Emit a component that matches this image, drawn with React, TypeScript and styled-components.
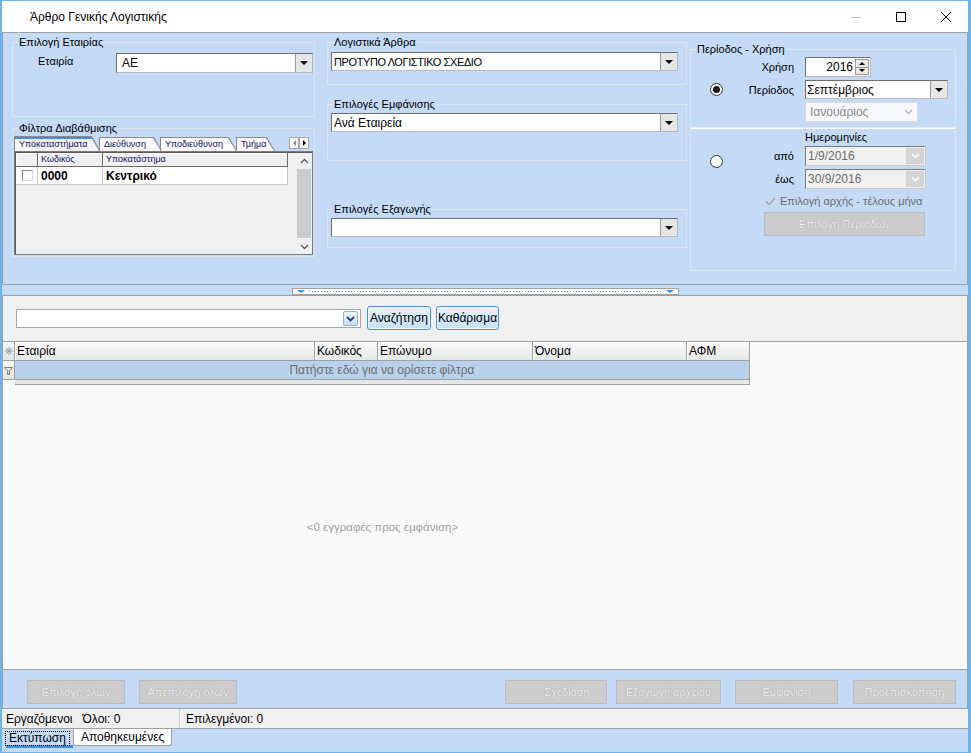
import React from 'react';
import styled, { createGlobalStyle } from 'styled-components';

const PANEL = '#c4daf7';
const FACE = '#f0f0f0';
const LINE = '#a0a0a0';
const GROUP = '#dbe5f1';
const FRAME = '#6bb3ec';

const GlobalStyle = createGlobalStyle`
  html, body { margin: 0; padding: 0; background: #ffffff; }
  body {
    font-family: 'Liberation Sans', Arial, sans-serif;
    font-size: 12px;
    color: #000;
  }
  *, *::before, *::after { box-sizing: border-box; }
`;

const Window = styled.div`
  width: 971px;
  height: 753px;
  display: flex;
  flex-direction: column;
  border-top: 1px solid ${FRAME};
  border-bottom: 1px solid ${FRAME};
  border-left: 2px solid ${FRAME};
  border-right: 3px solid ${FRAME};
  background: ${PANEL};
  overflow: hidden;
`;

/* title bar */
const TitleBar = styled.header`
  flex: none;
  height: 31px;
  display: flex;
  align-items: center;
  background: #fff;
  padding-left: 28px;
`;

const Caption = styled.span`
  flex: 1;
  font-size: 12px;
`;

const CaptionButton = styled.div`
  width: 45px;
  height: 31px;
  display: flex;
  align-items: center;
  justify-content: center;
`;

/* top panel */
const TopPanel = styled.section`
  flex: none;
  height: 253px;
  display: flex;
  align-items: flex-start;
  border: 1px solid ${LINE};
  padding-left: 9px;
  font-size: 11px;
`;

const Column = styled.div<{ $w: number; $ml?: number }>`
  width: ${(p) => p.$w}px;
  margin-left: ${(p) => p.$ml ?? 0}px;
  display: flex;
  flex-direction: column;
`;

const Group = styled.fieldset<{ $h: number; $mt: number }>`
  margin: ${(p) => p.$mt}px 0 0;
  padding: 0;
  min-width: 0;
  height: ${(p) => p.$h}px;
  border: 1px solid ${GROUP};
`;

const Legend = styled.legend`
  margin-left: 5px;
  padding: 0 1px;
  font-size: 11px;
  line-height: 14px;
`;

const FieldRow = styled.div<{ $mt?: number; $pl?: number }>`
  display: flex;
  align-items: flex-start;
  margin-top: ${(p) => p.$mt ?? 0}px;
  padding-left: ${(p) => p.$pl ?? 0}px;
`;

const FieldLabel = styled.span<{ $w: number }>`
  width: ${(p) => p.$w}px;
  margin-top: 1px;
  line-height: 14px;
`;

const Combo = styled.div<{ $w: number; $h?: number }>`
  width: ${(p) => p.$w}px;
  height: ${(p) => p.$h ?? 20}px;
  display: flex;
  background: #fff;
  border: 1px solid #6e6e6e;
  border-right-color: #b9b9b9;
  border-bottom-color: #b9b9b9;
`;

const ComboText = styled.span<{ $pl?: number; $narrow?: boolean }>`
  flex: 1;
  display: flex;
  align-items: center;
  padding-left: ${(p) => p.$pl ?? 2}px;
  white-space: nowrap;
  overflow: hidden;
  font-size: ${(p) => (p.$narrow ? '11px' : '12px')};
  letter-spacing: ${(p) => (p.$narrow ? '-0.4px' : '0')};
`;

const DropButton = styled.span`
  width: 17px;
  display: flex;
  align-items: center;
  justify-content: center;
  background: #e6e6e6;
  border-left: 1px solid #9a9a9a;
`;

const DropArrow = styled.span`
  width: 0;
  height: 0;
  border-left: 4px solid transparent;
  border-right: 4px solid transparent;
  border-top: 4px solid #000;
`;

/* tab control inside filter group */
const TabControl = styled.div`
  margin: 1px 1px 0;
  display: flex;
  flex-direction: column;
`;

const TabHeader = styled.div`
  height: 15px;
  display: flex;
  align-items: flex-end;
`;

const Tab = styled.div<{ $w: number; $ml: number; $active?: boolean }>`
  width: ${(p) => p.$w}px;
  height: ${(p) => (p.$active ? 15 : 14)}px;
  margin-left: ${(p) => p.$ml}px;
  padding: 1px 1px 0 1px;
  background: #8a8a8a;
  clip-path: polygon(0 0, calc(100% - 8px) 0, 100% 100%, 0 100%);
  position: relative;
  z-index: ${(p) => (p.$active ? 2 : 1)};
`;

const TabFace = styled.div<{ $active?: boolean }>`
  height: 100%;
  padding-left: 4px;
  background: ${(p) => (p.$active ? '#f4f4f4' : '#fafafa')};
  border-top: ${(p) => (p.$active ? '2px solid #3d8fe4' : 'none')};
  clip-path: polygon(0 0, calc(100% - 8px) 0, 100% 100%, 0 100%);
  font-size: 9px;
  line-height: ${(p) => (p.$active ? 11 : 13)}px;
  color: #10106a;
  white-space: nowrap;
`;

const TabScroll = styled.div`
  margin-left: auto;
  margin-right: 4px;
  margin-bottom: 2px;
  display: flex;
`;

const TabScrollButton = styled.span`
  width: 10px;
  height: 12px;
  display: flex;
  align-items: center;
  justify-content: center;
  background: #fbfbfb;
  border: 1px solid #a8a8a8;
`;

const SideArrow = styled.span<{ $dir: 'left' | 'right'; $dim?: boolean }>`
  width: 0;
  height: 0;
  border-top: 3px solid transparent;
  border-bottom: 3px solid transparent;
  ${(p) => (p.$dir === 'left' ? 'border-right' : 'border-left')}: 3px solid ${(p) => (p.$dim ? '#8c8c8c' : '#000')};
`;

const TabBody = styled.div`
  height: 104px;
  display: flex;
  background: ${FACE};
  border: 1px solid #7d7d7d;
  box-shadow: inset 1px 1px 0 #5a5a5a;
  padding: 1px 0 0 1px;
`;

const BranchGrid = styled.div`
  width: 272px;
  display: flex;
  flex-direction: column;
`;

const BranchHead = styled.div`
  height: 14px;
  display: flex;
`;

const BranchHeadCell = styled.div<{ $w: number }>`
  width: ${(p) => p.$w}px;
  padding-left: 3px;
  background: ${FACE};
  border-right: 1px solid #6a6a6a;
  border-bottom: 1px solid #6a6a6a;
  box-shadow: inset 1px 1px 0 #fff;
  font-size: 9px;
  line-height: 13px;
  color: #10106a;
  white-space: nowrap;
`;

const BranchRow = styled.div`
  height: 18px;
  display: flex;
  background: #fff;
`;

const BranchCell = styled.div<{ $w: number }>`
  width: ${(p) => p.$w}px;
  display: flex;
  align-items: center;
  padding-left: 3px;
  border-right: 1px solid #c8c8c8;
  border-bottom: 1px solid #c8c8c8;
  font-weight: bold;
  font-size: 12px;
`;

const SunkenCheck = styled.span`
  width: 11px;
  height: 11px;
  margin-left: 3px;
  background: #fff;
  border: 1px solid #8a8a8a;
  border-right-color: #dcdcdc;
  border-bottom-color: #dcdcdc;
`;

const VScroll = styled.div`
  width: 16px;
  margin-left: auto;
  display: flex;
  flex-direction: column;
  background: ${FACE};
`;

const VScrollButton = styled.div`
  height: 15px;
  display: flex;
  align-items: center;
  justify-content: center;
`;

const VThumb = styled.div`
  flex: 1;
  margin: 1px 1px;
  background: #cdcdcd;
`;

/* right column: period */
const PeriodGrid = styled.div`
  display: grid;
  grid-template-columns: 50px 54px 10px 1fr;
  row-gap: 3px;
  margin-top: 1px;
`;

const BottomGrid = styled.div`
  display: grid;
  grid-template-columns: 50px 54px 10px 1fr;
`;

const RadioCell = styled.div<{ $rows: string; $mt?: number }>`
  grid-column: 1;
  grid-row: ${(p) => p.$rows};
  display: flex;
  justify-content: center;
  align-self: ${(p) => (p.$mt === undefined ? 'center' : 'start')};
  margin-top: ${(p) => p.$mt ?? 0}px;
`;

const Radio = styled.span<{ $checked?: boolean }>`
  width: 13px;
  height: 13px;
  border-radius: 50%;
  border: 1px solid #333;
  background: #fff;
  display: flex;
  align-items: center;
  justify-content: center;
  &::after {
    content: '';
    width: 7px;
    height: 7px;
    border-radius: 50%;
    background: ${(p) => (p.$checked ? '#1a1a1a' : 'transparent')};
  }
`;

const GridLabel = styled.span<{ $row: number; $mt?: number }>`
  grid-column: 2;
  grid-row: ${(p) => p.$row};
  align-self: center;
  text-align: right;
  padding-right: 1px;
  margin-top: ${(p) => p.$mt ?? 0}px;
  line-height: 14px;
`;

const GridField = styled.div<{ $row: number; $mt?: number }>`
  grid-column: 4;
  grid-row: ${(p) => p.$row};
  margin-top: ${(p) => p.$mt ?? 0}px;
  display: flex;
`;

const SpinBox = styled.div`
  width: 66px;
  height: 20px;
  display: flex;
  background: #fff;
  border: 1px solid #6e6e6e;
  border-right-color: #b9b9b9;
  border-bottom-color: #b9b9b9;
`;

const SpinValue = styled.span`
  flex: 1;
  text-align: right;
  padding-right: 2px;
  line-height: 18px;
  font-size: 12px;
`;

const SpinButtons = styled.span`
  width: 14px;
  margin: 1px 1px 1px 0;
  display: flex;
  flex-direction: column;
  background: #e9e9e9;
  border: 1px solid #9a9a9a;
`;

const SpinHalf = styled.span<{ $up?: boolean }>`
  flex: 1;
  display: flex;
  align-items: center;
  justify-content: center;
  ${(p) => (p.$up ? 'border-bottom: 1px solid #9a9a9a;' : '')}
  &::after {
    content: '';
    border-left: 3px solid transparent;
    border-right: 3px solid transparent;
    ${(p) => (p.$up ? 'border-bottom' : 'border-top')}: 3px solid #000;
  }
`;

const DisabledCombo = styled.div<{ $w: number; $sunken?: boolean }>`
  width: ${(p) => p.$w}px;
  height: 20px;
  display: flex;
  background: ${(p) => (p.$sunken ? '#f0f0f0' : '#f7f9fc')};
  border: 1px solid ${(p) => (p.$sunken ? '#7a7a7a' : '#d9d9d9')};
  ${(p) => (p.$sunken ? 'border-right-color: #c9c9c9; border-bottom-color: #c9c9c9;' : '')}
  color: ${(p) => (p.$sunken ? '#6d6d6d' : '#8a8a8a')};
  font-size: 12px;
`;

const DisabledText = styled.span<{ $pl: number }>`
  flex: 1;
  padding-left: ${(p) => p.$pl}px;
  line-height: 18px;
  white-space: nowrap;
`;

const DisabledDrop = styled.span<{ $filled?: boolean }>`
  width: 18px;
  margin: ${(p) => (p.$filled ? '1px' : '0')};
  display: flex;
  align-items: center;
  justify-content: center;
  background: ${(p) => (p.$filled ? '#d4d4d4' : 'transparent')};
`;

const Separator = styled.div`
  height: 2px;
  margin-top: 5px;
  background: #ffffff;
  border-top: 1px solid #e6edf7;
`;

const DatesTitle = styled.div`
  grid-column: 4;
  grid-row: 1;
  margin-top: 1px;
  line-height: 14px;
`;

const CheckRow = styled.div`
  grid-column: 2 / 5;
  grid-row: 4;
  margin-top: 5px;
  padding-left: 23px;
  display: flex;
  align-items: center;
  gap: 3px;
  color: #6d6d6d;
  line-height: 14px;
`;

const CheckMarkBox = styled.span`
  width: 13px;
  height: 13px;
  display: flex;
  align-items: center;
  justify-content: center;
  border: 1px solid #cfd9e6;
`;

const PeriodsButton = styled.div`
  grid-column: 2 / 5;
  grid-row: 5;
  margin: 4px 0 0 23px;
  width: 161px;
  height: 24px;
  display: flex;
  align-items: center;
  justify-content: center;
  background: #cccccc;
  border: 1px solid #bdbdbd;
  color: #eeeeee;
  text-shadow: 0 0 1px #8f8f8f;
`;

/* splitter */
const Splitter = styled.div`
  flex: none;
  height: 10px;
  padding-left: 290px;
`;

const SplitHandle = styled.div`
  margin-top: 3px;
  width: 387px;
  height: 7px;
  display: flex;
  align-items: center;
  gap: 4px;
  padding: 0 4px;
  background: #fff;
  border: 1px solid ${LINE};
`;

const SplitArrow = styled.span`
  border-left: 4px solid transparent;
  border-right: 4px solid transparent;
  border-top: 3px solid #2f8ff0;
`;

const DottedLine = styled.span`
  flex: 1;
  height: 1px;
  background-image: linear-gradient(to right, #2f8ff0 1px, transparent 1px);
  background-size: 3px 1px;
`;

/* lower panel */
const LowerPanel = styled.div`
  flex: none;
  display: flex;
  flex-direction: column;
  border-top: 1px solid ${LINE};
  border-left: 1px solid ${LINE};
  border-right: 1px solid ${LINE};
`;

const SearchBar = styled.div`
  height: 46px;
  display: flex;
  align-items: center;
  padding: 0 0 1px 13px;
  background: ${FACE};
  border-bottom: 1px solid ${LINE};
`;

const SearchCombo = styled.div`
  width: 345px;
  height: 19px;
  display: flex;
  align-items: center;
  justify-content: flex-end;
  padding-right: 2px;
  background: #fff;
  border: 1px solid #a6a6a6;
  margin-top: 1px;
`;

const BlueDrop = styled.span`
  width: 15px;
  height: 15px;
  display: flex;
  align-items: center;
  justify-content: center;
  border: 1px solid #8db2dc;
  border-radius: 2px;
  background: linear-gradient(#eef5fc, #c9dff5);
`;

const SearchButton = styled.div<{ $w: number; $ml: number }>`
  width: ${(p) => p.$w}px;
  height: 24px;
  margin-left: ${(p) => p.$ml}px;
  display: flex;
  align-items: center;
  justify-content: center;
  border: 1px solid #4b8fcf;
  border-radius: 3px;
  background: linear-gradient(#e6f2fc, #d3e8f9 50%, #c6e1f7);
  box-shadow: inset 0 0 0 1px #eef7ff;
  font-size: 12px;
`;

const GridArea = styled.div`
  height: 327px;
  display: flex;
  flex-direction: column;
  background: #fafafa;
`;

const GridRow = styled.div`
  height: 19px;
  display: flex;
`;

const IndicatorCell = styled.div`
  width: 12px;
  display: flex;
  align-items: center;
  justify-content: center;
  background: linear-gradient(#f8f8f8, #e4e4e4);
  border-right: 1px solid ${LINE};
  border-bottom: 1px solid ${LINE};
`;

const ColumnHeader = styled.div<{ $w: number }>`
  width: ${(p) => p.$w}px;
  padding-left: 2px;
  display: flex;
  align-items: center;
  background: linear-gradient(#fbfbfb, #e7e7e7);
  border-right: 1px solid ${LINE};
  border-bottom: 1px solid ${LINE};
  box-shadow: inset 1px 1px 0 #ffffff;
  white-space: nowrap;
`;

const FilterCell = styled.div`
  width: 735px;
  display: flex;
  align-items: center;
  justify-content: center;
  background: #b9d1ea;
  border-right: 1px solid ${LINE};
  border-bottom: 1px solid ${LINE};
  color: #6d6d6d;
`;

const GridFooter = styled.div`
  height: 5px;
  width: 735px;
  margin-left: 12px;
  background: #e8e8e8;
  border-right: 1px solid ${LINE};
  border-bottom: 1px solid ${LINE};
`;

const EmptyMessage = styled.div`
  flex: 1;
  width: 735px;
  margin-left: 12px;
  display: flex;
  align-items: center;
  justify-content: center;
  color: #a0a0a0;
  font-size: 11.5px;
`;

const ButtonBar = styled.div`
  height: 39px;
  display: flex;
  align-items: flex-start;
  padding: 10px 0 0 24px;
  border-top: 1px solid ${LINE};
  background: ${PANEL};
`;

const DisabledButton = styled.div<{ $w: number; $ml?: number; $pl?: number }>`
  width: ${(p) => p.$w}px;
  height: 24px;
  margin-left: ${(p) => p.$ml ?? 0}px;
  padding-left: ${(p) => p.$pl ?? 0}px;
  display: flex;
  align-items: center;
  justify-content: center;
  background: #cccccc;
  border: 1px solid #bdbdbd;
  color: #eeeeee;
  text-shadow: 0 0 1px #8f8f8f;
  font-size: 11px;
  white-space: nowrap;
`;

const StatusBar = styled.footer`
  flex: none;
  height: 21px;
  display: flex;
  align-items: center;
  background: ${FACE};
  border-top: 1px solid ${LINE};
  border-bottom: 1px solid ${LINE};
`;

const StatusCell = styled.div<{ $w?: number; $pl: number }>`
  width: ${(p) => (p.$w ? `${p.$w}px` : 'auto')};
  height: 100%;
  display: flex;
  align-items: center;
  gap: 10px;
  padding-left: ${(p) => p.$pl}px;
  border-right: ${(p) => (p.$w ? `1px solid #d0d0d0` : 'none')};
`;

const BottomTabs = styled.nav`
  flex: 1;
  display: flex;
  align-items: flex-start;
  padding-left: 4px;
`;

const BottomTab = styled.div<{ $active?: boolean }>`
  height: ${(p) => (p.$active ? 19 : 17)}px;
  display: flex;
  align-items: ${(p) => (p.$active ? 'flex-start' : 'center')};
  padding: ${(p) => (p.$active ? '3px 4px 0 0' : '0 7px')};
  background: ${(p) => (p.$active ? 'transparent' : '#ffffff')};
  border: ${(p) => (p.$active ? 'none' : `1px solid ${LINE}`)};
  border-top: none;
  border-bottom: ${(p) => (p.$active ? '3px solid #3d8fe4' : `1px solid ${LINE}`)};
  border-radius: ${(p) => (p.$active ? '0' : '0 0 3px 3px')};
`;

const FocusText = styled.span`
  outline: 1px dotted #000;
  outline-offset: 0;
  padding: 0 3px;
  line-height: 13px;
`;

const Chevron = ({ up, color = '#5c5c5c' }: { up?: boolean; color?: string }) => (
  <svg width="9" height="6" viewBox="0 0 9 6">
    <path d={up ? 'M1 5L4.5 1.5L8 5' : 'M1 1L4.5 4.5L8 1'} fill="none" stroke={color} strokeWidth="1.3" />
  </svg>
);

const branchTabs = [
  { label: 'Υποκαταστήματα', w: 86, ml: 0 },
  { label: 'Διεύθυνση', w: 63, ml: -1 },
  { label: 'Υποδιεύθυνση', w: 77, ml: -2 },
  { label: 'Τμήμα', w: 39, ml: -1 },
];

const columns = [
  { label: 'Εταιρία', w: 300 },
  { label: 'Κωδικός', w: 63 },
  { label: 'Επώνυμο', w: 155 },
  { label: 'Όνομα', w: 154 },
  { label: 'ΑΦΜ', w: 63 },
];

export default function App() {
  return (
    <>
      <GlobalStyle />
      <Window>
        <TitleBar>
          <Caption>Άρθρο Γενικής Λογιστικής</Caption>
          <CaptionButton>
            <svg width="10" height="10"><path d="M0 5.5H10" stroke="#bdbdbd" /></svg>
          </CaptionButton>
          <CaptionButton>
            <svg width="10" height="10"><rect x="0.5" y="0.5" width="9" height="9" fill="none" stroke="#000" /></svg>
          </CaptionButton>
          <CaptionButton>
            <svg width="10" height="10"><path d="M0 0L10 10M10 0L0 10" stroke="#000" /></svg>
          </CaptionButton>
        </TitleBar>

        <TopPanel>
          <Column $w={303}>
            <Group $mt={2} $h={82}>
              <Legend>Επιλογή Εταιρίας</Legend>
              <FieldRow $mt={4} $pl={25}>
                <FieldLabel $w={78}>Εταιρία</FieldLabel>
                <Combo $w={197}>
                  <ComboText $pl={5}>ΑΕ</ComboText>
                  <DropButton><DropArrow /></DropButton>
                </Combo>
              </FieldRow>
            </Group>
            <Group $mt={4} $h={136}>
              <Legend>Φίλτρα Διαβάθμισης</Legend>
              <TabControl>
                <TabHeader>
                  {branchTabs.map((t, i) => (
                    <Tab key={t.label} $w={t.w} $ml={t.ml} $active={i === 0}>
                      <TabFace $active={i === 0}>{t.label}</TabFace>
                    </Tab>
                  ))}
                  <TabScroll>
                    <TabScrollButton><SideArrow $dir="left" $dim /></TabScrollButton>
                    <TabScrollButton><SideArrow $dir="right" /></TabScrollButton>
                  </TabScroll>
                </TabHeader>
                <TabBody>
                  <BranchGrid>
                    <BranchHead>
                      <BranchHeadCell $w={22} />
                      <BranchHeadCell $w={65}>Κωδικός</BranchHeadCell>
                      <BranchHeadCell $w={185}>Υποκατάστημα</BranchHeadCell>
                    </BranchHead>
                    <BranchRow>
                      <BranchCell $w={22}><SunkenCheck /></BranchCell>
                      <BranchCell $w={65}>0000</BranchCell>
                      <BranchCell $w={185}>Κεντρικό</BranchCell>
                    </BranchRow>
                  </BranchGrid>
                  <VScroll>
                    <VScrollButton><Chevron up /></VScrollButton>
                    <VThumb />
                    <VScrollButton><Chevron /></VScrollButton>
                  </VScroll>
                </TabBody>
              </TabControl>
            </Group>
          </Column>

          <Column $w={360} $ml={12}>
            <Group $mt={2} $h={50}>
              <Legend>Λογιστικά Άρθρα</Legend>
              <FieldRow $mt={3} $pl={3}>
                <Combo $w={347} $h={19}>
                  <ComboText $narrow>ΠΡΟΤΥΠΟ ΛΟΓΙΣΤΙΚΟ ΣΧΕΔΙΟ</ComboText>
                  <DropButton><DropArrow /></DropButton>
                </Combo>
              </FieldRow>
            </Group>
            <Group $mt={12} $h={64}>
              <Legend>Επιλογές Εμφάνισης</Legend>
              <FieldRow $mt={2} $pl={3}>
                <Combo $w={347} $h={19}>
                  <ComboText>Ανά Εταιρεία</ComboText>
                  <DropButton><DropArrow /></DropButton>
                </Combo>
              </FieldRow>
            </Group>
            <Group $mt={41} $h={46}>
              <Legend>Επιλογές Εξαγωγής</Legend>
              <FieldRow $mt={2} $pl={3}>
                <Combo $w={347} $h={19}>
                  <ComboText />
                  <DropButton><DropArrow /></DropButton>
                </Combo>
              </FieldRow>
            </Group>
          </Column>

          <Column $w={266} $ml={3}>
            <Group $mt={9} $h={229}>
              <Legend>Περίοδος - Χρήση</Legend>
              <PeriodGrid>
                <RadioCell $rows="1 / 4"><Radio $checked /></RadioCell>
                <GridLabel $row={1}>Χρήση</GridLabel>
                <GridField $row={1}>
                  <SpinBox>
                    <SpinValue>2016</SpinValue>
                    <SpinButtons><SpinHalf $up /><SpinHalf /></SpinButtons>
                  </SpinBox>
                </GridField>
                <GridLabel $row={2}>Περίοδος</GridLabel>
                <GridField $row={2}>
                  <Combo $w={143} $h={19}>
                    <ComboText $pl={1}>Σεπτέμβριος</ComboText>
                    <DropButton><DropArrow /></DropButton>
                  </Combo>
                </GridField>
                <GridField $row={3}>
                  <DisabledCombo $w={113}>
                    <DisabledText $pl={4}>Ιανουάριος</DisabledText>
                    <DisabledDrop><Chevron color="#b5b5b5" /></DisabledDrop>
                  </DisabledCombo>
                </GridField>
              </PeriodGrid>
              <Separator />
              <BottomGrid>
                <DatesTitle>Ημερομηνίες</DatesTitle>
                <RadioCell $rows="2 / 4" $mt={11}><Radio /></RadioCell>
                <GridLabel $row={2} $mt={2}>από</GridLabel>
                <GridField $row={2} $mt={2}>
                  <DisabledCombo $w={121} $sunken>
                    <DisabledText $pl={2}>1/9/2016</DisabledText>
                    <DisabledDrop $filled><Chevron color="#ffffff" /></DisabledDrop>
                  </DisabledCombo>
                </GridField>
                <GridLabel $row={3} $mt={3}>έως</GridLabel>
                <GridField $row={3} $mt={3}>
                  <DisabledCombo $w={121} $sunken>
                    <DisabledText $pl={2}>30/9/2016</DisabledText>
                    <DisabledDrop $filled><Chevron color="#ffffff" /></DisabledDrop>
                  </DisabledCombo>
                </GridField>
                <CheckRow>
                  <CheckMarkBox>
                    <svg width="11" height="9" viewBox="0 0 11 9">
                      <path d="M1 4.5L4 7.5L10 1" fill="none" stroke="#a9a9a9" strokeWidth="1.5" />
                    </svg>
                  </CheckMarkBox>
                  Επιλογή αρχής - τέλους μήνα
                </CheckRow>
                <PeriodsButton>Επιλογή Περιόδων</PeriodsButton>
              </BottomGrid>
            </Group>
          </Column>
        </TopPanel>

        <Splitter>
          <SplitHandle>
            <SplitArrow />
            <DottedLine />
            <SplitArrow />
          </SplitHandle>
        </Splitter>

        <LowerPanel>
          <SearchBar>
            <SearchCombo>
              <BlueDrop>
                <svg width="9" height="6" viewBox="0 0 9 6">
                  <path d="M1 1L4.5 4.5L8 1" fill="none" stroke="#1f3f6e" strokeWidth="1.8" />
                </svg>
              </BlueDrop>
            </SearchCombo>
            <SearchButton $w={64} $ml={6}>Αναζήτηση</SearchButton>
            <SearchButton $w={63} $ml={5}>Καθάρισμα</SearchButton>
          </SearchBar>

          <GridArea>
            <GridRow>
              <IndicatorCell>
                <svg width="8" height="8" viewBox="0 0 8 8">
                  <path d="M4 0V8M0 4H8M1 1L7 7M7 1L1 7" stroke="#9c9c9c" strokeWidth="1" />
                </svg>
              </IndicatorCell>
              {columns.map((c) => (
                <ColumnHeader key={c.label} $w={c.w}>{c.label}</ColumnHeader>
              ))}
            </GridRow>
            <GridRow>
              <IndicatorCell>
                <svg width="9" height="9" viewBox="0 0 9 9">
                  <path d="M0.5 1.5H8.5L5.5 5V8.5H3.5V5Z" fill="none" stroke="#7d7d7d" strokeWidth="1" />
                </svg>
              </IndicatorCell>
              <FilterCell>Πατήστε εδώ για να ορίσετε φίλτρα</FilterCell>
            </GridRow>
            <GridFooter />
            <EmptyMessage>&lt;0 εγγραφές προς εμφάνιση&gt;</EmptyMessage>
          </GridArea>

          <ButtonBar>
            <DisabledButton $w={98}>Επιλογή όλων</DisabledButton>
            <DisabledButton $w={98} $ml={14}>Απεπιλογή όλων</DisabledButton>
            <DisabledButton $w={102} $ml={268} $pl={22}>Σχεδίαση</DisabledButton>
            <DisabledButton $w={105} $ml={9}>Εξαγωγή αρχείου</DisabledButton>
            <DisabledButton $w={103} $ml={14}>Εμφάνιση</DisabledButton>
            <DisabledButton $w={103} $ml={15}>Προεπισκόπηση</DisabledButton>
          </ButtonBar>
        </LowerPanel>

        <StatusBar>
          <StatusCell $w={178} $pl={4}>
            <span>Εργαζόμενοι</span>
            <span>Όλοι: 0</span>
          </StatusCell>
          <StatusCell $pl={6}>Επιλεγμένοι: 0</StatusCell>
        </StatusBar>

        <BottomTabs>
          <BottomTab $active>
            <FocusText>Εκτύπωση</FocusText>
          </BottomTab>
          <BottomTab>Αποθηκευμένες</BottomTab>
        </BottomTabs>
      </Window>
    </>
  );
}
